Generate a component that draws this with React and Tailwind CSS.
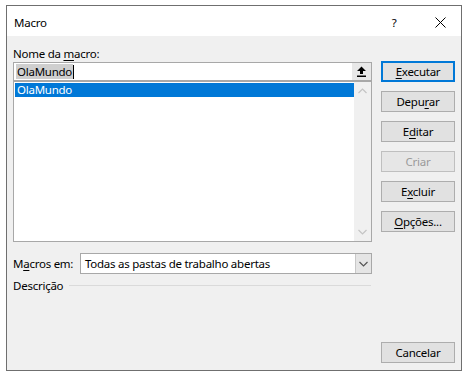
import React from 'react';

const font = { fontFamily: '"Noto Sans", "Open Sans", sans-serif' };

function Key({ children }) {
    return <span className="underline underline-offset-2">{children}</span>;
}

function Button({ children, primary, disabled, className = '' }) {
    let look = 'border border-[#adadad] bg-[#e1e1e1] text-black';
    if (primary) look = 'border-2 border-[#0078d7] bg-[#e1e1e1] text-black';
    if (disabled) look = 'border border-[#bfbfbf] bg-[#e6e6e6] text-[#9a9a9a]';
    return (
        <div className={`h-[21px] w-[74px] flex items-center justify-center text-[11.5px] tracking-[-0.25px] leading-none ${look} ${className}`}>
            <span>{children}</span>
        </div>
    );
}

function Chevron({ up, color = '#c4c4c4' }) {
    return (
        <svg width="9" height="6" viewBox="0 0 9 6">
            <path d={up ? 'M0.5 5 L4.5 1 L8.5 5' : 'M0.5 1 L4.5 5 L8.5 1'} fill="none" stroke={color} strokeWidth="1.2" />
        </svg>
    );
}

export default function App() {
    return (
        <div className="w-[468px] h-[376px] bg-white pt-[5px] pl-[6px] tracking-[-0.25px]" style={font}>
            <div className="w-[456px] h-[366px] border border-[#6f6f6f] flex flex-col">
                {/* Title bar */}
                <div className="h-[30px] bg-white flex items-center pt-[3px] pl-[7px] text-[11.5px] text-black shrink-0">
                    <span className="flex-1">Macro</span>
                    <span className="w-[20px] text-center mr-[31px]">?</span>
                    <svg width="11" height="11" viewBox="0 0 11 11" className="mr-[15px]">
                        <path d="M0.5 0.5 L10.5 10.5 M10.5 0.5 L0.5 10.5" stroke="#000" strokeWidth="1" />
                    </svg>
                </div>

                {/* Body */}
                <div className="flex-1 bg-[#f0f0f0] flex px-[6px] pb-[7px]">
                    {/* Left column */}
                    <div className="w-[359px] flex flex-col">
                        <div className="mt-[9px] h-[17px] text-[11.5px] text-black leading-[17px]">
                            Nome da <Key>m</Key>acro:
                        </div>
                        <div className="h-[19px] border border-[#a8a8a8] bg-white flex items-stretch">
                            <div className="flex-1 flex items-center pl-[2px]">
                                <span className="bg-[#cfcfcf] text-[11.5px] leading-[15px] px-[1px] text-black">OlaMundo</span>
                                <span className="w-px h-[14px] bg-black" />
                            </div>
                            <div className="w-[19px] bg-[#e8e8e8] flex items-center justify-center">
                                <svg width="11" height="11" viewBox="0 0 11 11">
                                    <path d="M5.5 0.5 L10 5 H7 V8 H4 V5 H1 Z" fill="#000" />
                                    <rect x="1" y="9.5" width="9" height="1.5" fill="#000" />
                                </svg>
                            </div>
                        </div>
                        <div className="h-[161px] border border-[#a8a8a8] bg-white flex">
                            <div className="flex-1 pt-[1px] pl-[1px]">
                                <div className="h-[14px] bg-[#0078d7] text-white text-[11.5px] leading-[14px] pl-[2px]">OlaMundo</div>
                            </div>
                            <div className="w-[17px] bg-[#f0f0f0] flex flex-col items-center justify-between py-[6px]">
                                <Chevron up />
                                <Chevron />
                            </div>
                        </div>

                        <div className="mt-[11px] flex items-center">
                            <span className="w-[67px] text-[11.5px] text-black">M<Key>a</Key>cros em:</span>
                            <div className="flex-1 h-[21px] border border-[#a8a8a8] bg-white flex">
                                <span className="flex-1 pl-[4px] text-[11.5px] leading-[19px] text-black">Todas as pastas de trabalho abertas</span>
                                <div className="w-[16px] bg-[#e5e5e5] border-l border-[#c8c8c8] flex items-center justify-center">
                                    <Chevron color="#555" />
                                </div>
                            </div>
                        </div>

                        <div className="mt-[3px] flex items-center">
                            <span className="text-[11.5px] text-black">Descrição</span>
                            <div className="flex-1 h-px bg-[#dadada] ml-[6px] mr-px" />
                        </div>
                    </div>

                    {/* Right column */}
                    <div className="ml-[9px] pt-[25px] flex flex-col gap-[9px]">
                        <Button primary><Key>E</Key>xecutar</Button>
                        <Button>Depu<Key>r</Key>ar</Button>
                        <Button>E<Key>d</Key>itar</Button>
                        <Button disabled>Criar</Button>
                        <Button>E<Key>x</Key>cluir</Button>
                        <Button><Key>O</Key>pções...</Button>
                        <Button className="mt-auto">Cancelar</Button>
                    </div>
                </div>
            </div>
        </div>
    );
}
